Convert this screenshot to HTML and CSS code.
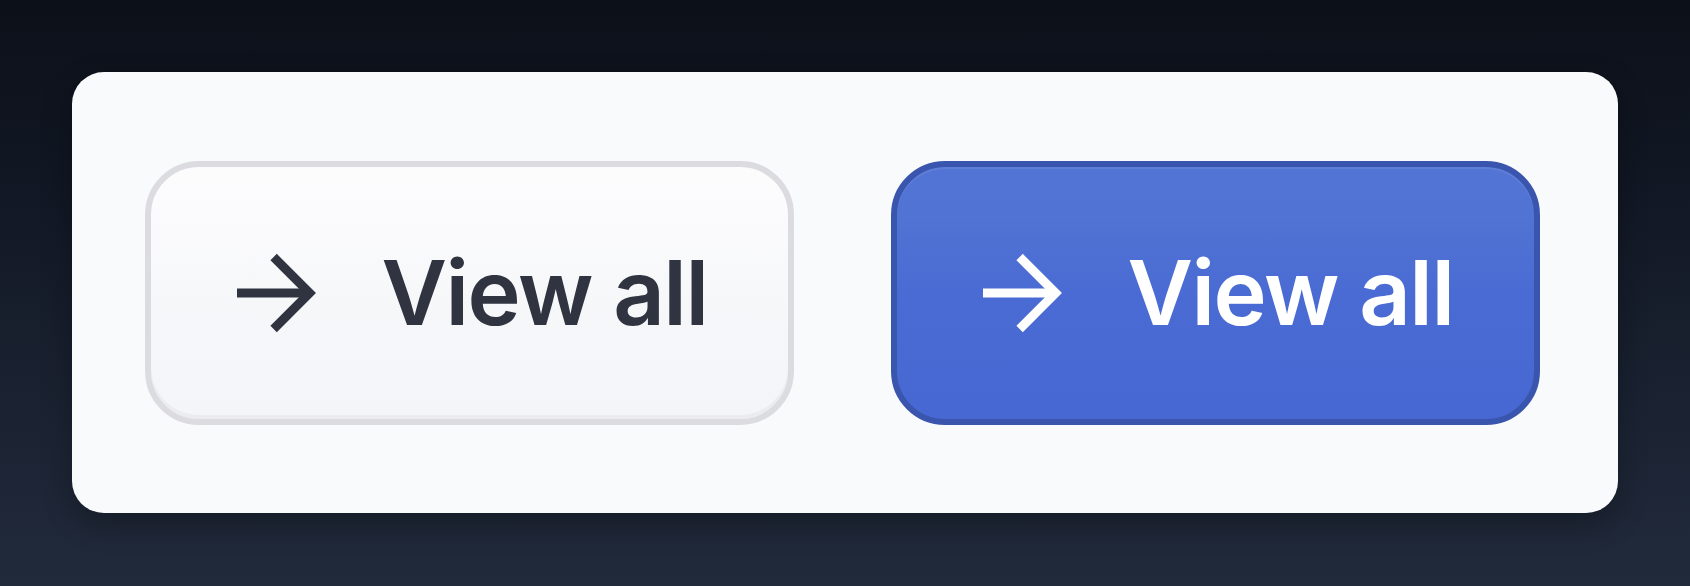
FILE: index.html
```html
<!DOCTYPE html>
<html lang="en">
<head>
  <meta charset="UTF-8" />
  <meta name="viewport" content="width=device-width, initial-scale=1.0"/>
  <title>View all buttons</title>
  <link rel="stylesheet" href="styles.css">
</head>
<body>
  <div class="card">
    <a href="#" class="btn btn-light">
      <svg class="arrow" viewBox="0 0 80 80" width="80" height="80">
        <path d="M1 40H73" />
        <path d="M37.6 4L73.6 40L37.6 76" />
      </svg>
      <span class="label">View all</span>
    </a>
    <a href="#" class="btn btn-primary">
      <svg class="arrow" viewBox="0 0 80 80" width="80" height="80">
        <path d="M1 40H73" />
        <path d="M37.6 4L73.6 40L37.6 76" />
      </svg>
      <span class="label">View all</span>
    </a>
  </div>
</body>
</html>
```

FILE: styles.css
```css
* {
  box-sizing: border-box;
  font-family: 'Inter', 'Liberation Sans', sans-serif;
}

body {
  margin: 0;
  height: 586px;
  overflow: hidden;
  background: linear-gradient(180deg, #0c1019 0%, #111723 30%, #1c2434 75%, #212a3b 100%);
  padding: 72px 0 0 72px;
}

.card {
  width: 1546px;
  height: 441px;
  background: #f9fafc;
  border-radius: 32px;
  box-shadow: 0 10px 30px rgba(0, 0, 0, 0.3);
  display: flex;
  align-items: center;
  gap: 97px;
  padding: 0 78px 0 73px;
}

.btn {
  width: 649px;
  height: 264px;
  border-radius: 54px;
  border: 6px solid;
  display: flex;
  align-items: center;
  justify-content: center;
  gap: 66px;
  padding-left: 4px;
  text-decoration: none;
}

.btn-light {
  background: linear-gradient(180deg, #fcfcfd 0%, #fbfbfd 20%, #f6f7f9 55%, #f4f5f8 100%);
  border-color: #dcdce0;
  color: #2f3440;
  box-shadow: inset 0 -4px 0 rgba(220, 220, 226, 0.35);
}

.btn-primary {
  background: linear-gradient(180deg, #5274d4 0%, #5173d3 20%, #4a6bd3 50%, #4768d2 100%);
  border-color: #3a55ad;
  color: #ffffff;
  box-shadow: inset 0 2px 0 rgba(255, 255, 255, 0.08);
}

.arrow {
  flex: none;
  fill: none;
  stroke: currentColor;
  stroke-width: 9;
  stroke-linecap: butt;
  stroke-linejoin: miter;
}

.label {
  font-size: 90px;
  font-weight: 600;
  line-height: 1;
  letter-spacing: -1.5px;
}
```
